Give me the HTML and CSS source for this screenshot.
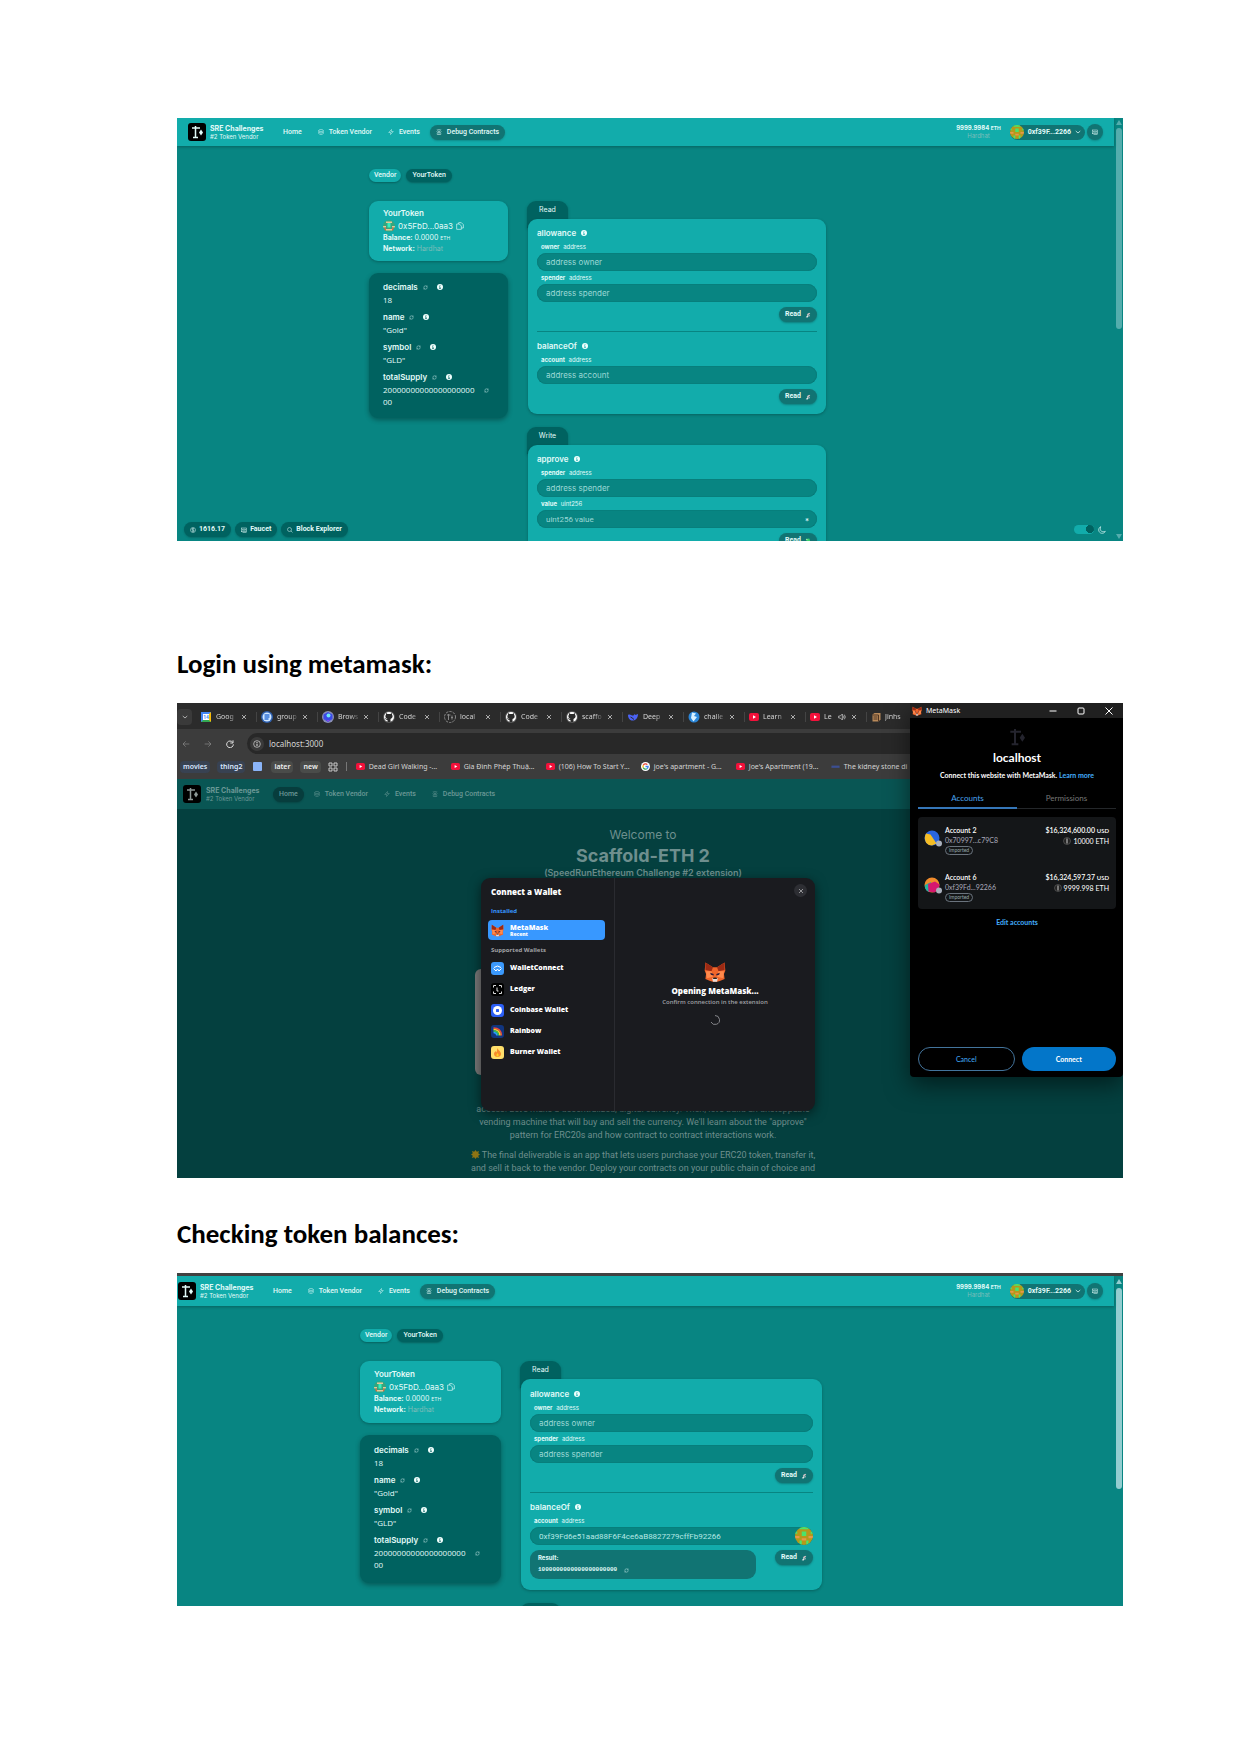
FILE: index.html
```
<!DOCTYPE html>
<html lang="en">
<head>
<meta charset="utf-8">
<title>SRE Challenges walkthrough</title>
<link rel="stylesheet" href="styles.css">
</head>
<body>
<svg class="sprite" aria-hidden="true">
  <symbol id="logo" viewBox="0 0 18 18"><rect width="18" height="18" rx="3" fill="#000"/><path d="M4 5h8M7.500 3v11M5 14.500h5" fill="none" stroke="currentColor" stroke-width="1.500"/><path d="M13 6.500l2 3-2 3-2-3z" fill="currentColor"/></symbol>
  <symbol id="db" viewBox="0 0 24 24"><g fill="none" stroke="currentColor" stroke-width="2"><ellipse cx="12" cy="6" rx="9" ry="4"/><path d="M3 6v12c0 5 18 5 18 0V6M3 12c0 5 18 5 18 0"/></g></symbol>
  <symbol id="bolt" viewBox="0 0 24 24"><path d="M14 2 3 14h8l-1 8 11-12h-8z" fill="none" stroke="currentColor" stroke-width="2"/></symbol>
  <symbol id="bug" viewBox="0 0 24 24"><g fill="none" stroke="currentColor" stroke-width="2"><circle cx="12" cy="7" r="5"/><path d="M5 22v-5c0-7 14-7 14 0v5zM12 13v9M2 10l3 3M22 10l-3 3M7 4 4 1M17 4l3-3"/></g></symbol>
  <symbol id="refresh" viewBox="0 0 24 24"><path d="M3 12C4 3 16 1 20 8V3m0 6h-5M21 12c-1 9-13 11-17 4v5m0-6h5" fill="none" stroke="currentColor" stroke-width="2"/></symbol>
  <symbol id="info" viewBox="0 0 24 24"><circle cx="12" cy="12" r="12" fill="#effffd"/><path d="M12 5v3M9 11h3v7M9 18h6" stroke="var(--info)" stroke-width="3" fill="none"/></symbol>
  <symbol id="copy" viewBox="0 0 24 24"><path d="M8 6V2h8l6 6v10h-6M2 6h8l6 6v10H2z" fill="none" stroke="currentColor" stroke-width="2"/></symbol>
  <symbol id="note" viewBox="0 0 24 24"><g fill="none" stroke="currentColor" stroke-width="2"><rect x="2" y="4" width="20" height="15"/><circle cx="12" cy="11" r="3"/><path d="M6 22h16M6 8v6M18 8v6"/></g></symbol>
  <symbol id="coin" viewBox="0 0 24 24"><g fill="none" stroke="currentColor" stroke-width="2"><circle cx="12" cy="12" r="10"/><path d="M16 8c-3-3-8-2-8 1 0 4 8 2 8 6 0 3-6 3-8 0M12 4v16"/></g></symbol>
  <symbol id="search" viewBox="0 0 24 24"><path d="M16 16l6 6M18 10a8 8 0 1 1-16 0 8 8 0 0 1 16 0z" fill="none" stroke="currentColor" stroke-width="2"/></symbol>
  <symbol id="chev" viewBox="0 0 24 24"><path d="M3 8l9 8 9-8" fill="none" stroke="currentColor" stroke-width="3"/></symbol>
  <symbol id="moon" viewBox="0 0 24 24"><path d="M8 2C4 15 12 20 22 16 18 25 3 24 2 12 2 8 4 4 8 2z" fill="none" stroke="currentColor" stroke-width="2"/></symbol>
  <symbol id="x" viewBox="0 0 24 24"><path d="M4 4l16 16M20 4 4 20" stroke="currentColor" stroke-width="3"/></symbol>
  <symbol id="phone" viewBox="0 0 24 24"><path d="M7 9l10-6 4 4-9 6z" fill="#d8c4c8"/><path d="M3 21l8-9 4 3-4 7z" fill="#e4e8e8"/><circle cx="17" cy="15" r="3" fill="#a5b0b4"/></symbol>
  <symbol id="money" viewBox="0 0 24 24"><path d="M3 4l14-2 5 14-10 6z" fill="#3bd36b"/><path d="M4 3l6 2-2 5zM14 12l6 2-4 6z" fill="#d9f7d0"/></symbol>
  <symbol id="gold" viewBox="0 0 8 8"><clipPath id="gc"><circle cx="4" cy="4" r="4"/></clipPath><g clip-path="url(#gc)"><path d="M0 0h8v8H0z" fill="#b5991b"/><path d="M2 0h4v1H2zM3 2h2v2H3zM2 6h1v2H2zM5 6h1v2H5zM0 2h1v1H0zM7 2h1v1H7z" fill="#4be36b"/><path d="M0 4h2v1H0zM6 4h2v1H6zM3 5h2v1H3z" fill="#e8964a"/></g></symbol>
  <symbol id="mint" viewBox="0 0 8 8"><clipPath id="mc"><circle cx="4" cy="4" r="4"/></clipPath><g clip-path="url(#mc)"><path d="M0 0h8v8H0z" fill="#36a57c"/><path d="M2 1h4v1H2zM0 4h2v1H0zM6 4h2v1H6zM2 6h4v1H2z" fill="#e4c99b"/><path d="M3 2h2v3H3z" fill="#35f0c0"/><path d="M1 5h1v2H1zM6 5h1v2H6z" fill="#d16f4a"/></g></symbol>
  <symbol id="fox" viewBox="0 0 32 30"><path d="M2 1l11 7h6l11-7 1 12-2 5 1 7-7 3-4 1h-6l-4-1-7-3 1-7-2-5z" fill="#f0652a"/><path d="M2 1l11 7-2 6-9-2zM30 1l-11 7 2 6 9-2z" fill="#9c2a14"/><path d="M3 14l8 0 2 8-9 2zM29 14l-8 0-2 8 9 2z" fill="#ff8a4c"/><path d="M9 16l5 2v2l-4-1zM23 16l-5 2v2l4-1z" fill="#2a1a3a"/><path d="M12 24h8l-1 5h-6z" fill="#e8dcd8"/><path d="M14 23h4l1 2h-6z" fill="#25201e"/></symbol>
  <symbol id="yt" viewBox="0 0 20 16"><rect width="20" height="16" rx="4" fill="#f2113a"/><path d="M8 4.500l6 3.500-6 3.500z" fill="#fff"/></symbol>
  <symbol id="gh" viewBox="0 0 24 24"><circle cx="12" cy="12" r="12" fill="#555"/><circle cx="12" cy="12" r="10" fill="#fff"/><path d="M9 22v-4c-4 0-4-3-6-4 2-1 3 2 6 2-5-2-5-6-3-9V4l3 2h6l3-2v3c2 3 2 7-3 9v6z" fill="#2b2b2b"/></symbol>
  <symbol id="globe" viewBox="0 0 24 24"><circle cx="12" cy="12" r="12" fill="#2d5fae"/><circle cx="12" cy="12" r="9" fill="#cfe6ff"/><path d="M7 8h10M7 12h10M7 16h8" stroke="#3273d8" stroke-width="3"/></symbol>
  <symbol id="google" viewBox="0 0 24 24"><circle cx="12" cy="12" r="12" fill="#fff"/><g fill="none" stroke-width="3.500"><path d="M17 7a7 7 0 0 0-11 2" stroke="#ea4335"/><path d="M6 9a7 7 0 0 0 0 6" stroke="#fbbc05"/><path d="M6 15a7 7 0 0 0 10 3" stroke="#34a853"/><path d="M16 18a7 7 0 0 0 3-6h-7" stroke="#4285f4"/></g></symbol>
</svg>

<main class="doc">
  <section class="shot shot-first" aria-label="Debug contracts">
    <div class="app">
      <header class="nav">
        <a class="brand" href="#"><svg class="i18"><use href="#logo"/></svg><span><b>SRE Challenges</b><small>#2 Token Vendor</small></span></a>
        <nav class="links"><a href="#">Home</a><a href="#"><svg class="i6"><use href="#db"/></svg>Token Vendor</a><a href="#"><svg class="i6"><use href="#bolt"/></svg>Events</a><a class="on" href="#"><svg class="i6"><use href="#bug"/></svg>Debug Contracts</a></nav>
        <div class="wallet"><p class="bal"><b>9999.9984 <small>ETH</small></b><span>Hardhat</span></p><button class="acct"><svg class="i14"><use href="#gold"/></svg>0xf39F...2266<svg class="i6"><use href="#chev"/></svg></button><button class="qr" aria-label="Faucet"><svg class="i6"><use href="#note"/></svg></button></div>
      </header>
      <div class="body">
        <div class="tabs"><button class="tab">Vendor</button><button class="tab dark">YourToken</button></div>
        <div class="cols">
          <div class="left">
            <div class="card token">
              <h3>YourToken</h3>
              <p class="addr"><svg class="i12"><use href="#mint"/></svg>0x5FbD...0aa3<svg class="i8"><use href="#copy"/></svg></p>
              <p class="l10"><b>Balance:</b> 0.0000 <small>ETH</small></p>
              <p class="l12"><b>Network:</b> <i>Hardhat</i></p>
            </div>
            <dl class="vars">
              <dt>decimals<svg class="i5"><use href="#refresh"/></svg><svg class="i6"><use href="#info"/></svg></dt><dd>18</dd>
              <dt>name<svg class="i5"><use href="#refresh"/></svg><svg class="i6"><use href="#info"/></svg></dt><dd>"Gold"</dd>
              <dt>symbol<svg class="i5"><use href="#refresh"/></svg><svg class="i6"><use href="#info"/></svg></dt><dd>"GLD"</dd>
              <dt>totalSupply<svg class="i5"><use href="#refresh"/></svg><svg class="i6"><use href="#info"/></svg></dt><dd class="big"><span>20000000000000000000<br>00</span><svg class="i5"><use href="#refresh"/></svg></dd>
            </dl>
          </div>
          <div class="right">
            <div class="tag">Read</div>
            <div class="card fns">
              <form class="fn"><h4>allowance<svg class="i6"><use href="#info"/></svg></h4>
                <label for="a1"><b>owner</b> address</label><input id="a1" placeholder="address owner">
                <label for="a2"><b>spender</b> address</label><input id="a2" placeholder="address spender">
                <div class="act"><button type="button" class="read">Read<svg class="i6"><use href="#phone"/></svg></button></div></form>
              <form class="fn"><h4>balanceOf<svg class="i6"><use href="#info"/></svg></h4>
                <label for="a3"><b>account</b> address</label><input id="a3" placeholder="address account">
                <div class="act"><button type="button" class="read">Read<svg class="i6"><use href="#phone"/></svg></button></div></form>
            </div>
            <div class="tag next">Write</div>
            <div class="card fns">
              <form class="fn"><h4>approve<svg class="i6"><use href="#info"/></svg></h4>
                <label for="a4"><b>spender</b> address</label><input id="a4" placeholder="address spender">
                <label for="a5"><b>value</b> uint256</label><span class="unit"><input id="a5" placeholder="uint256 value"><em>*</em></span>
                <div class="act"><button type="button" class="read">Read<svg class="i6"><use href="#money"/></svg></button></div></form>
            </div>
          </div>
        </div>
      </div>
      <footer class="foot"><button><svg class="i6"><use href="#coin"/></svg>1616.17</button><button><svg class="i6"><use href="#note"/></svg>Faucet</button><button><svg class="i6"><use href="#search"/></svg>Block Explorer</button><input class="toggle" type="checkbox" checked aria-label="Dark mode"><svg class="i8"><use href="#moon"/></svg></footer>
    </div>
    <div class="bar"><i class="up"></i><i class="thumb"></i><i class="down"></i></div>
  </section>

  <h2 class="after-first">Login using metamask:</h2>

  <section class="shot browser" aria-label="Connect wallet">
    <div class="strip">
      <button class="drop" aria-label="Search tabs"><svg class="i6"><use href="#chev"/></svg></button>
      <div class="t"><span class="cal">14</span><span>Goog</span><svg class="i6"><use href="#x"/></svg></div>
      <div class="t"><svg class="i12"><use href="#globe"/></svg><span>group</span><svg class="i6"><use href="#x"/></svg></div>
      <div class="t"><svg class="i12" viewBox="0 0 24 24"><circle cx="12" cy="12" r="12" fill="#8a8fb5"/><path d="M12 2l9 5v9l-9 6-9-6V7z" fill="#3a49e8"/><circle cx="13" cy="9" r="4" fill="#6de6f2"/><path d="M5 14c3 6 10 6 14 1l-7 6z" fill="#a547e2"/></svg><span>Brows</span><svg class="i6"><use href="#x"/></svg></div>
      <div class="t"><svg class="i12"><use href="#gh"/></svg><span>Code</span><svg class="i6"><use href="#x"/></svg></div>
      <div class="t"><svg class="i12" viewBox="0 0 24 24"><g fill="none" stroke="#888" stroke-width="2"><circle cx="12" cy="12" r="11" stroke-dasharray="5 2"/><path d="M6 8h7M9 6v12M16 9v8M14 13h4"/></g></svg><span>local</span><svg class="i6"><use href="#x"/></svg></div>
      <div class="t"><svg class="i12"><use href="#gh"/></svg><span>Code</span><svg class="i6"><use href="#x"/></svg></div>
      <div class="t"><svg class="i12"><use href="#gh"/></svg><span>scaffo</span><svg class="i6"><use href="#x"/></svg></div>
      <div class="t"><svg class="i12" viewBox="0 0 24 24"><path d="M2 8c4-3 7 2 11 1 2-3 3-3 4-1l5-2c0 7-4 12-9 13C7 20 2 15 2 8z" fill="#4b63f5"/><path d="M7 12c3 1 4 3 7 5" stroke="#2b2b2b" stroke-width="2"/></svg><span>Deep</span><svg class="i6"><use href="#x"/></svg></div>
      <div class="t"><svg class="i12" viewBox="0 0 24 24"><circle cx="12" cy="12" r="11" fill="#2b86d8"/><path d="M8 3l8 2-4 5 6 2-7 9-5-7z" fill="#d8f0ff"/></svg><span>challe</span><svg class="i6"><use href="#x"/></svg></div>
      <div class="t"><svg class="i10"><use href="#yt"/></svg><span>Learn</span><svg class="i6"><use href="#x"/></svg></div>
      <div class="t sound"><svg class="i10"><use href="#yt"/></svg><span>Le</span><svg class="i8" viewBox="0 0 24 24"><path d="M2 9h5l6-6v18l-6-6H2zM16 8q4 4 0 8M19 5q6 7 0 14" fill="none" stroke="#ddd" stroke-width="2"/></svg><svg class="i6"><use href="#x"/></svg></div>
      <div class="t"><svg class="i10" viewBox="0 0 20 20"><path d="M3 5l4-3h12v13l-4 4H3z" fill="#b98a5a"/><path d="M3 6h12v13M5 10h8M5 14h8" fill="none" stroke="#4f3522" stroke-width="2"/></svg><span>Jinhs</span></div>
    </div>
    <div class="tools">
      <button aria-label="Back"><svg class="i8" viewBox="0 0 24 24"><path d="M22 12H3m8-8-8 8 8 8" fill="none" stroke="#8b8b8b" stroke-width="2"/></svg></button>
      <button aria-label="Forward"><svg class="i8" viewBox="0 0 24 24"><path d="M2 12h19m-8-8 8 8-8 8" fill="none" stroke="#8b8b8b" stroke-width="2"/></svg></button>
      <button aria-label="Reload"><svg class="i8" viewBox="0 0 24 24"><path d="M20 7A10 10 0 1 0 22 13M21 1v8h-8" fill="none" stroke="#e0e0e0" stroke-width="3"/></svg></button>
      <div class="omni"><span class="site"><svg class="i8" viewBox="0 0 24 24"><circle cx="12" cy="12" r="10" fill="none" stroke="#e0e0e0" stroke-width="2"/><path d="M12 6v3M12 11v7" stroke="#e0e0e0" stroke-width="3"/></svg></span><input aria-label="Address" value="localhost:3000"></div>
    </div>
    <div class="marks">
      <a class="chip blue" href="#">movies</a><a class="chip blue" href="#">thing2</a><a class="chip sq" href="#" aria-label="Group"></a><a class="chip" href="#">later</a><a class="chip" href="#">new</a>
      <svg class="i10" viewBox="0 0 20 20"><path d="M2 2h6v6H2zM12 2h6v6h-6zM2 12h6v6H2zM12 12h6v6h-6z" fill="none" stroke="#c8c8c8" stroke-width="2"/></svg><i class="sep"></i>
      <a class="m" href="#"><svg class="i9"><use href="#yt"/></svg>Dead Girl Walking -...</a><a class="m" href="#"><svg class="i9"><use href="#yt"/></svg>Gia Đình Phép Thuậ...</a><a class="m" href="#"><svg class="i9"><use href="#yt"/></svg>(106) How To Start Y...</a><a class="m" href="#"><svg class="i9"><use href="#google"/></svg>joe's apartment - G...</a><a class="m" href="#"><svg class="i9"><use href="#yt"/></svg>Joe's Apartment (19...</a><a class="m" href="#"><svg class="i9" viewBox="0 0 20 20"><path d="M1 8h18v5H1z" fill="#3c4f92"/></svg>The kidney stone di</a>
    </div>
    <header class="nav dim">
      <a class="brand" href="#"><svg class="i18"><use href="#logo"/></svg><span><b>SRE Challenges</b><small>#2 Token Vendor</small></span></a>
      <nav class="links"><a class="on" href="#">Home</a><a href="#"><svg class="i6"><use href="#db"/></svg>Token Vendor</a><a href="#"><svg class="i6"><use href="#bolt"/></svg>Events</a><a href="#"><svg class="i6"><use href="#bug"/></svg>Debug Contracts</a></nav>
    </header>
    <div class="home">
      <p class="wel">Welcome to</p>
      <h3>Scaffold-ETH 2</h3>
      <p class="sub">(SpeedRunEthereum Challenge #2 extension)</p>
      <div class="pic"></div>
      <p class="txt"><svg class="i10" viewBox="0 0 20 20"><circle cx="10" cy="10" r="8" fill="#6a5a58"/></svg> Create your own ERC20 token and a vendor for it, then trade with open<br>access. Let's make a decentralized, digital currency. Then, let's build an unstoppable<br>vending machine that will buy and sell the currency. We'll learn about the "approve"<br>pattern for ERC20s and how contract to contract interactions work.</p>
      <p class="txt"><svg class="i9" viewBox="0 0 20 20"><path d="M10 0l3 4 5-2-2 5 4 3-4 3 2 5-5-2-3 4-3-4-5 2 2-5-4-3 4-3-2-5 5 2z" fill="#8d7414"/></svg> The final deliverable is an app that lets users purchase your ERC20 token, transfer it,<br>and sell it back to the vendor. Deploy your contracts on your public chain of choice and</p>
    </div>
    <div class="modal" role="dialog" aria-label="Connect a Wallet">
      <div class="side">
        <h3>Connect a Wallet</h3>
        <p class="inst">Installed</p>
        <button class="w sel"><svg class="i13"><use href="#fox"/></svg><span>MetaMask<small>Recent</small></span></button>
        <p class="supp">Supported Wallets</p>
        <button class="w"><svg class="i13" viewBox="0 0 26 26"><rect width="26" height="26" rx="6" fill="#3b99fc"/><path d="M6 11q7-6 14 0M5 13l5 5 3-4 3 4 5-5" fill="none" stroke="#fff" stroke-width="2"/></svg>WalletConnect</button>
        <button class="w"><svg class="i13" viewBox="0 0 26 26"><rect width="26" height="26" rx="6" fill="#000"/><path d="M5 9V5h5M16 5h5v4M5 17v4h5M16 21h5v-4M12 9v7h3" fill="none" stroke="#ddd" stroke-width="2"/></svg>Ledger</button>
        <button class="w"><svg class="i13" viewBox="0 0 26 26"><rect width="26" height="26" rx="6" fill="#2c5ff6"/><circle cx="13" cy="13" r="9" fill="#fff"/><rect x="10" y="10" width="6" height="6" rx="1" fill="#2c5ff6"/></svg>Coinbase Wallet</button>
        <button class="w"><svg class="i13" viewBox="0 0 26 26"><rect width="26" height="26" rx="6" fill="#11357f"/><g fill="none" stroke-width="3"><path d="M5 6q15 0 16 15" stroke="#f04a3a"/><path d="M5 9q12 0 13 12" stroke="#ffd21f"/><path d="M5 12q9 0 10 9" stroke="#38c558"/><path d="M5 15q6 0 7 6" stroke="#2fa0ff"/></g></svg>Rainbow</button>
        <button class="w"><svg class="i13" viewBox="0 0 26 26"><rect width="26" height="26" rx="6" fill="#ffdf6b"/><path d="M13 4c1 5 7 6 7 12 0 8-14 8-14 0 0-3 2-4 3-6l2 3z" fill="#f78a2a"/><path d="M13 14c3 3 3 7 0 7s-3-4 0-7z" fill="#ffd21f"/></svg>Burner Wallet</button>
      </div>
      <div class="pane">
        <button class="close" aria-label="Close"><svg class="i6"><use href="#x"/></svg></button>
        <svg class="i22"><use href="#fox"/></svg>
        <h3>Opening MetaMask...</h3>
        <p>Confirm connection in the extension</p>
        <svg class="i10" viewBox="0 0 20 20"><path d="M10 1a9 9 0 1 1-8 13" fill="none" stroke="#85868a" stroke-width="2"/></svg>
      </div>
    </div>
    <div class="mm" role="dialog" aria-label="MetaMask">
      <div class="title"><svg class="i10"><use href="#fox"/></svg><span>MetaMask</span><svg class="i8" viewBox="0 0 16 16"><path d="M1 8h14" stroke="#fff" stroke-width="2"/></svg><svg class="i8" viewBox="0 0 16 16"><rect x="2" y="2" width="12" height="12" rx="2" fill="none" stroke="#fff" stroke-width="2"/></svg><svg class="i8" viewBox="0 0 16 16"><path d="M1 1l14 14M15 1 1 15" stroke="#fff" stroke-width="2"/></svg></div>
      <svg class="ghost"><use href="#logo"/></svg>
      <h3>localhost</h3>
      <p class="ask">Connect this website with MetaMask. <a href="#">Learn more</a></p>
      <div class="mt"><button class="on">Accounts</button><button>Permissions</button></div>
      <div class="accts">
        <div class="ac"><svg class="i18" viewBox="0 0 36 36"><circle cx="16" cy="16" r="15" fill="#2a66e0"/><path d="M4 7l9 2 12 18-9 4C4 31-2 18 4 7z" fill="#f5bd25"/><circle cx="30" cy="27" r="6" fill="#aab1bd"/></svg><p><b>Account 2</b><span>0x70997...c79C8</span><small>Imported</small></p><p class="amt"><b>$16,324,600.00 <small>USD</small></b><span><svg class="i8" viewBox="0 0 16 16"><circle cx="8" cy="8" r="7" fill="#222" stroke="#777"/><path d="M8 3v10" stroke="#ccc" stroke-width="2"/></svg>10000 ETH</span></p></div>
        <div class="ac"><svg class="i18" viewBox="0 0 36 36"><circle cx="16" cy="16" r="15" fill="#f08b2b"/><path d="M2 16l12-6-4 20C4 28 1 22 2 16z" fill="#25b3a0"/><path d="M8 14l14-5 9 6-2 9-8 7-12-2z" fill="#d6186f"/><circle cx="30" cy="27" r="6" fill="#aab1bd"/></svg><p><b>Account 6</b><span>0xf39Fd...92266</span><small>Imported</small></p><p class="amt"><b>$16,324,597.37 <small>USD</small></b><span><svg class="i8" viewBox="0 0 16 16"><circle cx="8" cy="8" r="7" fill="#222" stroke="#777"/><path d="M8 3v10" stroke="#ccc" stroke-width="2"/></svg>9999.998 ETH</span></p></div>
      </div>
      <a class="edit" href="#">Edit accounts</a>
      <div class="btns"><button>Cancel</button><button class="go">Connect</button></div>
    </div>
  </section>

  <h2 class="after-second">Checking token balances:</h2>

  <section class="shot shot-last" aria-label="Token balance">
    <div class="app">
      <header class="nav">
        <a class="brand" href="#"><svg class="i18"><use href="#logo"/></svg><span><b>SRE Challenges</b><small>#2 Token Vendor</small></span></a>
        <nav class="links"><a href="#">Home</a><a href="#"><svg class="i6"><use href="#db"/></svg>Token Vendor</a><a href="#"><svg class="i6"><use href="#bolt"/></svg>Events</a><a class="on" href="#"><svg class="i6"><use href="#bug"/></svg>Debug Contracts</a></nav>
        <div class="wallet"><p class="bal"><b>9999.9984 <small>ETH</small></b><span>Hardhat</span></p><button class="acct"><svg class="i14"><use href="#gold"/></svg>0xf39F...2266<svg class="i6"><use href="#chev"/></svg></button><button class="qr" aria-label="Faucet"><svg class="i6"><use href="#note"/></svg></button></div>
      </header>
      <div class="body">
        <div class="tabs"><button class="tab">Vendor</button><button class="tab dark">YourToken</button></div>
        <div class="cols">
          <div class="left">
            <div class="card token">
              <h3>YourToken</h3>
              <p class="addr"><svg class="i12"><use href="#mint"/></svg>0x5FbD...0aa3<svg class="i8"><use href="#copy"/></svg></p>
              <p class="l10"><b>Balance:</b> 0.0000 <small>ETH</small></p>
              <p class="l12"><b>Network:</b> <i>Hardhat</i></p>
            </div>
            <dl class="vars">
              <dt>decimals<svg class="i5"><use href="#refresh"/></svg><svg class="i6"><use href="#info"/></svg></dt><dd>18</dd>
              <dt>name<svg class="i5"><use href="#refresh"/></svg><svg class="i6"><use href="#info"/></svg></dt><dd>"Gold"</dd>
              <dt>symbol<svg class="i5"><use href="#refresh"/></svg><svg class="i6"><use href="#info"/></svg></dt><dd>"GLD"</dd>
              <dt>totalSupply<svg class="i5"><use href="#refresh"/></svg><svg class="i6"><use href="#info"/></svg></dt><dd class="big"><span>20000000000000000000<br>00</span><svg class="i5"><use href="#refresh"/></svg></dd>
            </dl>
          </div>
          <div class="right">
            <div class="tag">Read</div>
            <div class="card fns">
              <form class="fn"><h4>allowance<svg class="i6"><use href="#info"/></svg></h4>
                <label for="b1"><b>owner</b> address</label><input id="b1" placeholder="address owner">
                <label for="b2"><b>spender</b> address</label><input id="b2" placeholder="address spender">
                <div class="act"><button type="button" class="read">Read<svg class="i6"><use href="#phone"/></svg></button></div></form>
              <form class="fn"><h4>balanceOf<svg class="i6"><use href="#info"/></svg></h4>
                <label for="b3"><b>account</b> address</label><span class="unit"><input id="b3" value="0xf39Fd6e51aad88F6F4ce6aB8827279cffFb92266"><svg class="i18"><use href="#gold"/></svg></span>
                <div class="act"><output class="result"><b>Result:</b><code>1000000000000000000000<svg class="i5"><use href="#refresh"/></svg></code></output><button type="button" class="read">Read<svg class="i6"><use href="#phone"/></svg></button></div></form>
            </div>
            <div class="tag next" aria-hidden="true"></div>
          </div>
        </div>
      </div>
    </div>
    <div class="bar"><i class="up"></i><i class="thumb"></i></div>
  </section>
</main>
</body>
</html>
```
FILE: styles.css
```
* { box-sizing: border-box; }
body { margin: 0; background: #fff; }
h2, h3, h4, p, dl, dd { margin: 0; }
button, input { font: inherit; color: inherit; border: 0; padding: 0; margin: 0; background: none; }
a { color: inherit; text-decoration: none; }
svg { display: block; flex: none; }
i { font-style: normal; }
.sprite { position: absolute; width: 0; height: 0; }

.i5 { width: 5px; height: 5px; }
.i6 { width: 6px; height: 6px; }
.i8 { width: 8px; height: 8px; }
.i9 { width: 9px; height: 9px; }
.i10 { width: 10px; height: 10px; }
.i12 { width: 12px; height: 12px; }
.i13 { width: 13px; height: 13px; }
.i14 { width: 14px; height: 14px; }
.i18 { width: 18px; height: 18px; }
.i22 { width: 22px; height: 22px; }

.doc { padding: 118px 118px 149px 177px; }
.doc h2 { font: bold 27px/32px Carlito, Lato, sans-serif; color: #000; }
.doc .after-first { margin: 107px 0 23px; }
.doc .after-second { margin: 40px 0 23px; }

/* Contract pages */
.shot { --info: #12acab; position: relative; display: flex; overflow: hidden; background: #088582; color: #e2fbf9; font: 8px/12px Inter, sans-serif; }
.shot-first { height: 423px; }
.shot-last { height: 333px; border-top: 3px solid #414141; }
.app { position: relative; flex: 1; min-width: 0; }

.nav { display: flex; align-items: center; height: 28px; padding: 0 11px; background: #12acab; box-shadow: 0 1px 3px #0004; }
.shot-last .nav, .dim { height: 30px; }
.shot-last .nav { padding-left: 1px; }
.brand { display: flex; align-items: center; gap: 4px; width: 89px; }
.brand b, .brand small { display: block; white-space: nowrap; }
.brand b { font-size: 7px; line-height: 9px; }
.brand small { font-size: 6px; line-height: 8px; }
.links { display: flex; gap: 4px; font: 500 7px/15px Roboto, sans-serif; }
.links a { display: flex; align-items: center; gap: 5px; padding: 0 6px; border-radius: 8px; white-space: nowrap; }
.links .on { background: #117473; box-shadow: 0 1px 2px #0003; }
.wallet { margin-left: auto; display: flex; align-items: center; gap: 2px; }
.bal { margin-right: 7px; text-align: center; font-size: 6px; line-height: 8px; }
.bal small { font-size: 5px; }
.bal span { display: block; color: #7bbdba; }
.acct { display: flex; align-items: center; gap: 4px; height: 15px; padding-right: 4px; border-radius: 8px; background: #117473; font: bold 7px/15px Roboto, sans-serif; }
.qr { display: grid; place-items: center; width: 16px; height: 16px; border-radius: 50%; background: #117473; box-shadow: 0 1px 2px #0003; }

.body { padding: 23px 0 0 192px; }
.shot-last .body { padding-left: 183px; }
.tabs { display: flex; gap: 5px; font: 500 7px/13px Roboto, sans-serif; }
.tab { padding: 0 5px; border-radius: 7px; background: #12acab; box-shadow: 0 1px 2px #0004; }
.tab.dark { padding: 0 6px; background: #006260; }
.cols { display: grid; grid-template-columns: 139px 298px; gap: 20px; margin-top: 19px; }
.shot-last .cols { grid-template-columns: 141px 301px; }
.card { border-radius: 9px; background: #12acab; box-shadow: 0 1px 3px #0004; }
.token { padding: 6px 14px; margin-bottom: 12px; font-size: 7px; white-space: nowrap; }
.shot-last .token { padding: 7px 14px; }
.token h3 { font-size: 8px; line-height: 12px; font-weight: 600; }
.token small { font-size: 5px; }
.token i { color: #7fbdb9; }
.addr { display: flex; align-items: center; gap: 3px; font-size: 8px; line-height: 14px; }
.l10 { line-height: 10px; }
.l12 { line-height: 12px; }
.vars { --info: #006260; padding: 7px 14px 10px; border-radius: 9px; background: #006260; box-shadow: 0 2px 5px #0005; }
.shot-last .vars { padding: 8px 14px 12px; }
.vars dt { display: flex; align-items: center; gap: 5px; font-weight: 600; line-height: 14px; }
.vars dt .i6 { margin-left: 4px; }
.vars dd { font: 8px/12px "Open Sans", sans-serif; }
.vars dd + dt { margin-top: 4px; }
.big { display: flex; gap: 10px; }
.big svg { margin-top: 4px; }
.tag { width: 41px; height: 27px; margin: 0 0 -9px -1px; border-radius: 9px 9px 0 0; background: #006260; text-align: center; font-size: 7px; line-height: 18px; box-shadow: 0 1px 3px #0004; }
.tag.next { margin-top: 13px; }
.fns { position: relative; padding: 8px 9px 10px; }
.shot-last .fns { padding: 9px 9px 11px; }
.fn + .fn { margin-top: 9px; padding-top: 8px; border-top: 1px solid #088582; }
.fn h4 { display: flex; align-items: center; gap: 5px; font-size: 8px; line-height: 13px; font-weight: 600; }
.fn h4 svg { margin-bottom: 2px; }
.fn label { display: block; padding-left: 4px; font-size: 6px; line-height: 13px; }
.fn label b { margin-right: 2px; }
.fn input { display: block; width: 100%; height: 18px; padding: 0 9px; border-radius: 9px; background: #088582; color: #b5e8e4; font-size: 8px; box-shadow: inset 0 0 1px #0006; }
.fn input::placeholder { color: #9bd8d5; opacity: 1; }
.unit { position: relative; display: block; }
.fn .unit input { font-family: Roboto, sans-serif; }
.unit em { position: absolute; right: 8px; top: 5px; font-style: normal; }
.unit svg { position: absolute; right: 0; top: 0; }
.act { display: flex; align-items: flex-start; margin-top: 5px; }
.read { display: flex; align-items: center; gap: 4px; height: 15px; margin-left: auto; padding: 0 6px; border-radius: 8px; background: #117473; font: bold 7px/15px Roboto, sans-serif; box-shadow: 0 1px 2px #0004; }
.result { width: 226px; height: 29px; padding: 2px 8px; border-radius: 9px; background: #117473; font-size: 6px; line-height: 12px; }
.result b { display: block; }
.result code { display: flex; align-items: center; gap: 7px; font: bold 6px/12px "Liberation Mono", monospace; }
.foot { position: absolute; left: 7px; right: 8px; bottom: 4px; display: flex; align-items: center; gap: 4px; }
.foot button { display: flex; align-items: center; gap: 3px; height: 15px; padding: 0 6px; border-radius: 8px; background: #006260; font: bold 7px/15px Roboto, sans-serif; box-shadow: 0 1px 2px #0003; }
.toggle { appearance: none; margin-left: auto; width: 20px; height: 9px; border-radius: 5px; background: radial-gradient(circle at 16px 4px, #006260 0 4px, #12acab 4px); }
.bar { display: flex; flex-direction: column; align-items: center; width: 9px; padding: 2px 0; background: #088582; }
.bar .up { border: 3px solid transparent; border-bottom: 5px solid #54adad; border-top: 0; }
.bar .down { margin-top: auto; border: 3px solid transparent; border-top: 5px solid #54adad; border-bottom: 0; }
.bar .thumb { width: 6px; height: 201px; margin-top: 3px; border-radius: 3px; background: #54adad; }
.shot-last .bar { padding-top: 3px; }
.shot-last .thumb { margin-top: 4px; background: #93cdd0; }
.shot-last .up { border-bottom-color: #93cdd0; }

/* Browser window */
.browser { display: block; height: 475px; background: #04403f; font: 8px/12px "Noto Sans", sans-serif; color: #d5d5d5; }
.strip { display: flex; align-items: center; height: 26px; padding-top: 2px; background: #2b2b2b; font-size: 7px; }
.drop { display: grid; place-items: center; width: 15px; height: 16px; border-radius: 4px; background: #3a3a3a; margin-right: 8px; }
.t { display: flex; align-items: center; flex: none; width: 61px; height: 12px; padding-right: 14px; position: relative; }
.t::after { content: ""; position: absolute; right: 4px; width: 1px; height: 10px; background: #444; }
.t span:not(.cal) { flex: 1; margin: 0 5px 0 4px; overflow: hidden; width: 0; mask: linear-gradient(90deg, #000 60%, #0003); }
.t.sound span { margin-right: 2px; }
.t .i8 { margin-right: 5px; }
.t:last-child::after { display: none; }
.cal { width: 10px; height: 10px; margin: 0 1px; border: 2px solid #4285f4; border-right-color: #fbbc05; border-bottom-color: #34a853; background: #fff; color: #4285f4; font: bold 5px/6px Roboto, sans-serif; text-align: center; }
.tools { display: flex; align-items: center; height: 25px; padding: 4px 0 0 5px; background: #3c3c3c; gap: 14px; }
.omni { flex: 1; display: flex; align-items: center; gap: 5px; height: 21px; margin-left: -1px; padding-left: 3px; border-radius: 11px 0 0 11px; background: #282828; }
.site { display: grid; place-items: center; width: 14px; height: 14px; border-radius: 50%; background: #3a3a3a; }
.omni input { flex: 1; font-size: 8px; height: 14px; }
.marks { display: flex; align-items: center; height: 25px; padding-left: 3px; background: #3c3c3c; font-size: 7px; white-space: nowrap; }
.chip { margin-right: 7px; padding: 0 3px; border-radius: 4px; background: #4a4c4a; color: #f0f0f0; font-weight: 600; }
.chip.blue { background: #384252; color: #d8e6ff; }
.chip.sq { width: 9px; height: 9px; margin: 0 9px 0 1px; border-radius: 1px; background: #8ab4f8; }
.sep { width: 1px; height: 9px; margin: 0 9px 0 8px; background: #777; }
.marks .m { display: flex; flex: none; align-items: center; gap: 4px; width: 95px; }
.dim { padding-left: 6px; background: #095654; color: #6b9896; font-family: Inter, sans-serif; box-shadow: none; }
.dim .brand { width: 90px; gap: 5px; }
.dim .i18 { color: #8e9998; }
.dim .on { background: #073d3d; }
.home { padding: 17px 14px 0 0; text-align: center; color: #6e8f8e; font: 9px/13px Inter, sans-serif; }
.home .wel { font-size: 12px; line-height: 18px; }
.home h3 { font-size: 18px; line-height: 24px; }
.home .sub { font-weight: 600; line-height: 10px; }
.pic { height: 106px; margin: 91px 298px 15px; border-radius: 6px; background: #777; }
.txt { margin-bottom: 7px; white-space: nowrap; font-family: Roboto, sans-serif; }
.txt svg { display: inline-block; vertical-align: -1px; }

/* Wallet dialog */
.modal { position: absolute; left: 304px; top: 175px; display: flex; width: 334px; height: 233px; border-radius: 9px; background: #1a1b1f; color: #fff; box-shadow: 0 3px 12px #0008; font: 8px/12px "Open Sans", sans-serif; }
.side { width: 134px; padding: 7px 9px 0 7px; border-right: 1px solid #2a2b30; }
.side h3, .pane h3 { font-size: 8px; line-height: 14px; font-weight: 800; white-space: nowrap; }
.side h3, .side p { padding-left: 3px; }
.side p { font-size: 6px; line-height: 10px; font-weight: bold; }
.side .inst { color: #3898ff; margin: 7px 0 4px; }
.side .supp { color: #a0a1a5; margin: 5px 0 3px; }
.w { display: flex; align-items: center; gap: 6px; width: 100%; height: 20px; padding-left: 3px; border-radius: 4px; text-align: left; font-size: 7px; font-weight: 800; line-height: 8px; }
.w + .w { margin-top: 1px; }
.w.sel { background: #3898ff; }
.w small { display: block; font-size: 5px; line-height: 5px; }
.pane { position: relative; flex: 1; display: flex; flex-direction: column; align-items: center; padding-top: 83px; font-size: 6px; }
.pane h3 { margin-top: 1px; }
.pane p { line-height: 9px; margin-bottom: 8px; color: #a0a1a5; font-weight: 600; }
.close { position: absolute; right: 8px; top: 6px; display: grid; place-items: center; width: 13px; height: 13px; border-radius: 50%; background: #2d2e33; color: #b5b5b8; }

/* Extension window */
.mm { position: absolute; right: 0; top: 0; display: flex; flex-direction: column; align-items: center; width: 213px; height: 374px; padding: 0 7px 6px 8px; border-radius: 0 0 4px 4px; background: #000; color: #fff; box-shadow: 0 8px 24px #0008; font: 7px/10px Lato, sans-serif; }
.title { align-self: stretch; display: flex; align-items: center; gap: 20px; height: 15px; margin: 0 -7px 0 -8px; padding: 0 10px 0 2px; background: #202020; font-family: "Noto Sans", sans-serif; }
.title span { flex: 1; margin-left: -16px; }
.ghost { width: 24px; height: 24px; margin-top: 7px; color: #24242e; }
.mm h3 { margin-top: 2px; font-size: 12px; line-height: 14px; }
.ask { margin: 5px 0 12px; font-weight: bold; white-space: nowrap; }
.ask a, .edit { color: #43aefc; font-weight: bold; }
.mt { align-self: stretch; display: flex; }
.mt button { flex: 1; height: 17px; padding-bottom: 4px; border-bottom: 1px solid #24272a; color: #777; font-size: 8px; }
.mt .on { border-bottom: 2px solid #3576b8; color: #4aa5f0; }
.accts { align-self: stretch; display: grid; gap: 18px; margin: 8px 0 9px; padding: 8px 7px 8px 6px; border-radius: 4px; background: #141618; }
.ac { display: flex; align-items: flex-start; gap: 3px; line-height: 9px; height: 29px; }
.ac > svg { margin-top: 5px; }
.ac p > b, .ac p > span { display: block; line-height: 10px; }
.ac b { font-weight: 600; }
.ac p > span { color: #aab; }
.ac p > small { display: inline-block; padding: 0 3px; border: 1px solid #6a737d; border-radius: 5px; color: #9aa; font-size: 5px; line-height: 7px; }
.ac .amt { margin-left: auto; text-align: right; }
.ac .amt small { font-size: 6px; }
.ac .amt > span { display: flex; align-items: center; justify-content: flex-end; gap: 2px; color: #fff; }
.edit { line-height: 8px; }
.btns { align-self: stretch; display: flex; gap: 7px; margin-top: auto; }
.btns button { flex: 1; height: 24px; border: 1px solid #43749c; border-radius: 12px; color: #43aefc; }
.btns .go { border: 0; background: #0376c9; color: #fff; font-weight: bold; }
```
